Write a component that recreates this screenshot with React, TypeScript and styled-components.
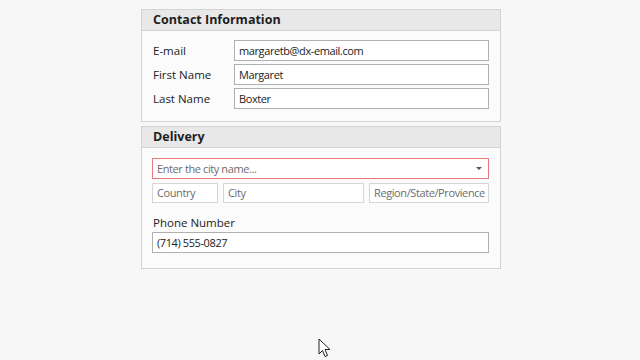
import React from 'react'
import styled, { createGlobalStyle } from 'styled-components'

const Global = createGlobalStyle`
  html, body {
    margin: 0;
    padding: 0;
    background: #f7f7f7;
  }
  body {
    font-family: "Open Sans", "Noto Sans", sans-serif;
    font-size: 11px;
    letter-spacing: -0.4px;
    color: #222;
  }
`

const Page = styled.div`
  position: relative;
  width: 640px;
  height: 360px;
  padding-top: 9px;
  box-sizing: border-box;
  overflow: hidden;
`

const Column = styled.div`
  width: 360px;
  margin-left: 141px;
  display: flex;
  flex-direction: column;
  gap: 4px;
`

const Panel = styled.section`
  border: 1px solid #d3d3d3;
  background: #fbfbfb;
`

const PanelHeader = styled.div`
  height: 20px;
  line-height: 20px;
  padding-left: 11px;
  background: #e8e8e8;
  border-bottom: 1px solid #d3d3d3;
  font-weight: bold;
  font-size: 12.5px;
  letter-spacing: 0;
  color: #1e1e1e;
`

const PanelBody = styled.div<{ $pad?: string }>`
  padding: ${(p) => p.$pad || '9px 11px 10px 11px'};
  display: flex;
  flex-direction: column;
`

const Row = styled.div`
  display: flex;
  align-items: center;
  height: 24px;
`

const Label = styled.div`
  width: 81px;
  flex-shrink: 0;
  padding-left: 1px;
  font-size: 11.5px;
  letter-spacing: 0;
`

const Field = styled.div<{ $muted?: boolean; $invalid?: boolean; $h?: number }>`
  flex: 1;
  min-width: 0;
  height: ${(p) => p.$h || 19}px;
  box-sizing: content-box;
  border: 1px solid ${(p) => (p.$invalid ? '#e87a7a' : p.$muted ? '#d6d6d6' : '#b0b0b0')};
  background: #fff;
  padding: 0 3px 0 4px;
  line-height: ${(p) => p.$h || 19}px;
  color: ${(p) => (p.$muted ? '#6c6c6c' : '#222')};
  display: flex;
  align-items: center;
  justify-content: space-between;
  white-space: nowrap;
  overflow: hidden;
`

const Arrow = styled.span`
  width: 0;
  height: 0;
  border-left: 3px solid transparent;
  border-right: 3px solid transparent;
  border-top: 3px solid #555;
  margin-right: 3px;
`

const Split = styled.div`
  display: grid;
  grid-template-columns: 66px 141px 120px;
  gap: 5px;
  margin-top: 4px;
`

const Caption = styled(Label)`
  width: auto;
  margin-top: 13px;
  margin-bottom: 2px;
  line-height: 14px;
`

const Cursor = styled.svg`
  position: absolute;
  left: 318px;
  top: 338px;
`

export default function App() {
  return (
    <Page>
      <Global />
      <Column>
        <Panel>
          <PanelHeader>Contact Information</PanelHeader>
          <PanelBody $pad="7px 11px 11px 10px">
            <Row>
              <Label>E-mail</Label>
              <Field>margaretb@dx-email.com</Field>
            </Row>
            <Row>
              <Label>First Name</Label>
              <Field>Margaret</Field>
            </Row>
            <Row>
              <Label>Last Name</Label>
              <Field>Boxter</Field>
            </Row>
          </PanelBody>
        </Panel>
        <Panel>
          <PanelHeader>Delivery</PanelHeader>
          <PanelBody $pad="10px 11px 15px 10px">
            <Field $invalid $muted>
              Enter the city name...
              <Arrow />
            </Field>
            <Split>
              <Field $muted $h={18}>Country</Field>
              <Field $muted $h={18}>City</Field>
              <Field $muted $h={18}>Region/State/Provience</Field>
            </Split>
            <Caption>Phone Number</Caption>
            <Field>(714) 555-0827</Field>
          </PanelBody>
        </Panel>
      </Column>
      <Cursor width="14" height="22" viewBox="0 0 14 22">
        <path
          d="M1 1 L1 16 L4.5 12.5 L7 18.5 L9.5 17.5 L7 11.5 L12 11.5 Z"
          fill="#fff"
          stroke="#222"
          strokeWidth="1"
          strokeLinejoin="round"
        />
      </Cursor>
    </Page>
  )
}
